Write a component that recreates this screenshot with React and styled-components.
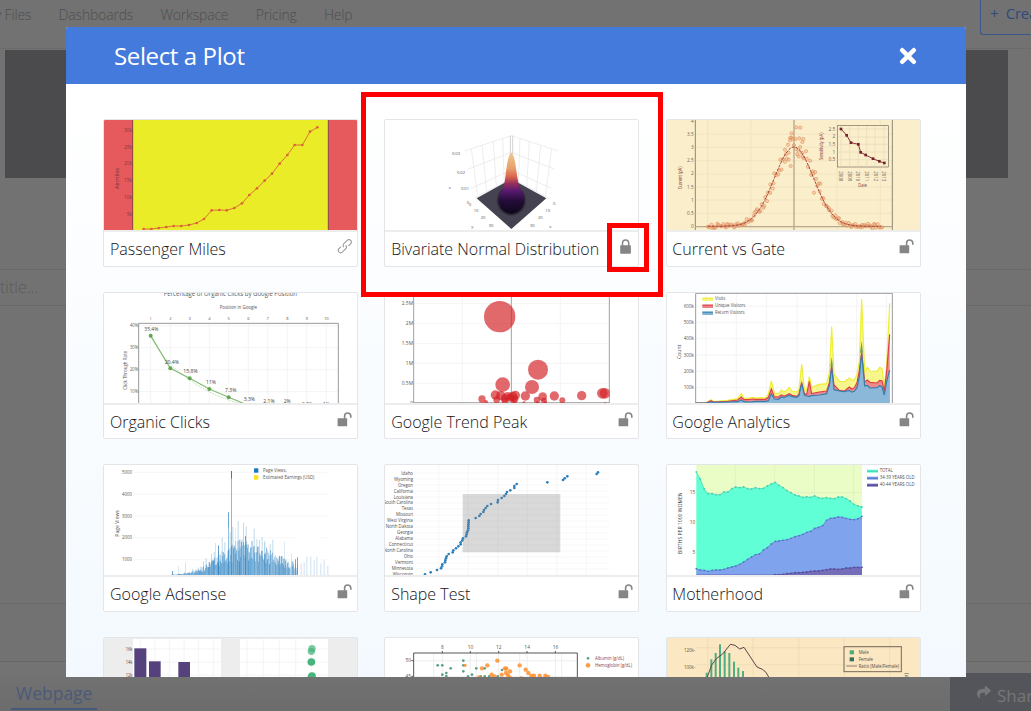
import React from "react";
import styled, { createGlobalStyle } from "styled-components";
import { FaTimes, FaShare } from "react-icons/fa";

const GlobalStyle = createGlobalStyle`
  * { box-sizing: border-box; }
  body { margin: 0; overflow: hidden; }
`;

const Page = styled.div`
  position: relative;
  width: 1031px;
  height: 711px;
  overflow: hidden;
  display: flex;
  flex-direction: column;
  background: #727272;
  font-family: "Open Sans", sans-serif;
  font-weight: 300;
  color: #545454;
`;

const TopBar = styled.div`
  display: flex;
  justify-content: space-between;
  height: 49px;
  border-bottom: 1px solid #6b6b6b;
`;

const Nav = styled.nav`
  display: flex;
  gap: 27.3px;
  margin-left: -17px;
  padding-top: 5px;
  font-size: 14px;
  line-height: 20px;
  font-weight: 300;
  letter-spacing: -0.18px;
  color: #4e4e4e;
  white-space: nowrap;
`;

const CreateButton = styled.div`
  width: 51px;
  height: 35px;
  border-left: 1px solid #3b5785;
  border-bottom: 1px solid #3b5785;
  border-bottom-left-radius: 3px;
  padding: 3px 0 0 9px;
  font-size: 15px;
  line-height: 20px;
  color: #2f4a7b;
  font-weight: 400;
  word-spacing: 4px;
  letter-spacing: -0.3px;
  white-space: nowrap;
  overflow: hidden;
`;

const Band = styled.div`
  height: 128px;
  margin: 1px 23px 0 5px;
  background: #4b4b4d;
`;

const TitleRow = styled.div`
  height: 37px;
  margin-top: 91px;
  border-top: 1px solid #686868;
  border-bottom: 1px solid #686868;
  font-size: 16px;
  line-height: 35px;
  white-space: nowrap;
  color: #5b5b5b;
`;

const Workspace = styled.div`
  height: 298px;
  border-bottom: 1px solid #6a6a6a;
`;

const Spacer = styled.div`
  height: 58px;
  border-bottom: 1px solid #666;
`;

const BottomBar = styled.div`
  flex: 1;
  display: flex;
  justify-content: space-between;
  align-items: flex-end;
  background: linear-gradient(#747474, #6c6c6c);
`;

const Tab = styled.div`
  margin-left: 11px;
  width: 86px;
  height: 31px;
  margin-bottom: 1px;
  border-bottom: 2px solid #485879;
  padding-left: 5px;
  font-size: 17.5px;
  line-height: 28px;
  font-weight: 400;
  color: #4b5a78;
`;

const ShareButton = styled.div`
  display: flex;
  align-items: center;
  gap: 6px;
  width: 81px;
  height: 38px;
  padding: 6px 0 0 27px;
  overflow: hidden;
  background: #54555a;
  color: #777779;
  font-size: 17px;
  font-weight: 400;
  svg { flex: none; margin-top: -7px; }
`;

const Modal = styled.section`
  position: absolute;
  left: 66px;
  top: 27px;
  width: 900px;
  height: 650px;
  display: flex;
  flex-direction: column;
  overflow: hidden;
  border-radius: 2px 2px 0 0;
  background: #fff;
`;

const ModalHeader = styled.header`
  flex: none;
  height: 57px;
  display: flex;
  align-items: center;
  justify-content: space-between;
  padding: 0 46px 0 48px;
  background: #447adb;
  color: #fff;
`;

const ModalTitle = styled.h1`
  margin: 0;
  font-size: 24px;
  line-height: 58px;
  font-weight: 400;
  letter-spacing: -0.38px;
`;

const ModalBody = styled.div`
  flex: 1;
  padding: 35.4px 0 0 37.2px;
  background: linear-gradient(#fff, #f3f9fe);
  overflow: hidden;
`;

const Grid = styled.div`
  display: grid;
  grid-template-columns: repeat(3, 255px);
  grid-auto-rows: 147.6px;
  column-gap: 26.2px;
  row-gap: 24.9px;
`;

const Card = styled.article`
  display: flex;
  flex-direction: column;
  border: 1px solid #e3e5e8;
  border-radius: 2px;
  background: #fff;
  overflow: hidden;
`;

const Thumb = styled.svg`
  display: block;
  flex: none;
  width: 254px;
  height: 110px;
  font-family: "Open Sans", sans-serif;
  font-weight: 400;
`;

const CardFooter = styled.div`
  flex: 1;
  display: flex;
  justify-content: space-between;
  border-top: 2px solid #ededee;
  padding: 0 5.3px 0 5.8px;
`;

const CardTitle = styled.h2`
  margin: 0;
  font-size: 16px;
  line-height: 34px;
  font-weight: 300;
  color: #141418;
  white-space: nowrap;
`;

const Glyph = styled.svg`
  flex: none;
  width: 15px;
  height: 17px;
  margin-top: 6px;
`;

const Highlight = styled.div`
  position: absolute;
  left: ${(p) => p.$x}px;
  top: ${(p) => p.$y}px;
  width: ${(p) => p.$w}px;
  height: ${(p) => p.$h}px;
  border: ${(p) => p.$b}px solid #fe0000;
`;

function StatusIcon({ kind }) {
  if (kind === "link")
    return (
      <Glyph viewBox="0 0 15 17" fill="none" stroke="#929292" strokeWidth="1">
        <g transform="translate(7.8 8.2) rotate(-45)">
          <path d="M1.2 0 A2.5 2.5 0 0 1 -.4 2.4 H-5.8 A2.4 2.4 0 0 1 -5.8 -2.4 H-2.8" />
          <path d="M-1.2 0 A2.5 2.5 0 0 1 .4 -2.4 H5.8 A2.4 2.4 0 0 1 5.8 2.4 H2.8" />
        </g>
      </Glyph>
    );
  if (kind === "locked")
    return (
      <Glyph viewBox="0 0 15 17">
        <rect x="2.2" y="7.2" width="10.7" height="8.6" rx="0.8" fill="#858585" />
        <path d="M4.5 8V5a3.1 3.1 0 0 1 6.2 0v3" fill="none" stroke="#858585" strokeWidth="1.5" />
      </Glyph>
    );
  return (
    <Glyph viewBox="0 0 15 17">
      <rect x="0.6" y="7.3" width="9.6" height="8" rx="0.5" fill="#858585" />
      <path d="M7.6 7.8V5.1a3.1 3.1 0 0 1 6.2 0v1.6" fill="none" stroke="#858585" strokeWidth="1.6" />
    </Glyph>
  );
}

/* Chart label: `w` fits the run to a given width, `r` rotates it about its start. */
function Label({ x, y, w, s = 13, a = "start", fill = "#555", r, children }) {
  return (
    <text
      x={x}
      y={y}
      fontSize={s * 1.12}
      textAnchor={a}
      fill={fill}
      textLength={w}
      lengthAdjust="spacingAndGlyphs"
      transform={r ? `rotate(${r} ${x} ${y})` : undefined}
    >
      {children}
    </text>
  );
}

const Lines = ({ xs = [], ys = [], x0, x1, y0, y1, stroke = "#eee", width = 2 }) => (
  <g stroke={stroke} strokeWidth={width}>
    {xs.map((x) => <line key={"x" + x} x1={x} x2={x} y1={y0} y2={y1} />)}
    {ys.map((y) => <line key={"y" + y} x1={x0} x2={x1} y1={y} y2={y} />)}
  </g>
);

const pointsOf = (s) => s.trim().split(/\s+/).map((p) => p.split(",").map(Number));
const noise = (i) => {
  const v = Math.sin(i * 127.1 + 3.7) * 43758.5453;
  return v - Math.floor(v);
};

function Miles() {
  const pts = "431,688 454,688 476,685 499,682 521,679 544,679 567,676 590,670 612,658 635,632 658,631 680,632 703,625 726,611 748,586 771,566 794,543 816,522 839,492 862,466 884,436 907,436 930,396 952,383";
  return (
    <Thumb viewBox="312 361 762 330">
      <rect x="312" y="361" width="762" height="330" fill="#e65a5e" />
      <rect x="398" y="361" width="588" height="330" fill="#e9ec27" />
      <Lines xs={[398, 985]} y0={361} y1={691} stroke="#8a3d4b" width={3} />
      {["30k", "25k", "20k", "15k", "10k", "5k"].map((t, i) => (
        <Label key={t} x={396} y={396 + i * 50.7} a="end" s={13} fill="#7e3b40">{t}</Label>
      ))}
      <Label x={357} y={568} w={64} s={13} r={-90} fill="#6e353a">Airmiles</Label>
      <polyline points={pts} fill="none" stroke="#db7439" strokeWidth="3" />
      {pointsOf(pts).map(([x, y]) => <circle key={x} cx={x} cy={y} r="4" fill="#df603c" />)}
    </Thumb>
  );
}

function Bivariate() {
  return (
    <Thumb viewBox="75 91 762 330">
      <defs>
        <linearGradient id="peak" x1="0" y1="190" x2="0" y2="372" gradientUnits="userSpaceOnUse">
          <stop offset="0" stopColor="#ecc98f" />
          <stop offset=".25" stopColor="#e8a06c" />
          <stop offset=".4" stopColor="#d9614d" />
          <stop offset=".5" stopColor="#98305f" />
          <stop offset=".62" stopColor="#591a6e" />
          <stop offset=".78" stopColor="#260d3b" />
          <stop offset="1" stopColor="#0d0719" />
        </linearGradient>
        <radialGradient id="base">
          <stop offset=".7" stopColor="#0c0717" />
          <stop offset="1" stopColor="#454251" />
        </radialGradient>
      </defs>
      <g fill="none" stroke="#e4e4e4" strokeWidth="2">
        <path d="M313 184 L454 138 L596 184 M323 239 L454 188 L585 239 M334 296 L454 241 L574 296 M345 325 L454 266 L565 325" />
        <path d="M334 178 L353 320 M366 167 L380 306 M400 156 L409 291 M428 147 L433 278 M575 178 L556 320 M542 167 L529 306 M508 156 L500 291 M480 147 L475 278" />
      </g>
      <path d="M451 138v55M458 138v55" stroke="#bdbdbd" strokeWidth="2" />
      <path d="M350 326L454 268L559 326L454 418Z" fill="#454251" />
      <ellipse cx="454" cy="333" rx="46" ry="47" fill="url(#base)" />
      <path d="M454 190C460 191 465 205 472 262Q477 298 490 314C500 345 479 372 454 372C428 372 408 345 419 314Q432 298 436 262C443 205 448 191 454 190Z" fill="url(#peak)" />
      {[["0.03", 276, 197], ["0.02", 291, 254], ["0.01", 303, 301], ["z", 266, 297], ["0", 320, 342], ["0", 326, 348], ["10", 341, 367], ["20", 362, 388], ["30", 386, 411], ["y", 334, 415], ["0", 579, 347], ["10", 556, 367], ["20", 534, 388], ["30", 510, 411], ["x", 568, 415]].map(([t, x, y], i) => (
        <Label key={i} x={x} y={y} s={11} w={t.length === 4 ? 24 : undefined}>{t}</Label>
      ))}
    </Thumb>
  );
}

function Gate() {
  const curve = (x) => 350 - 238 * Math.exp(-((x - 399) ** 2) / (2 * 59 ** 2));
  const xs = Array.from({ length: 131 }, (_, i) => 140 + i * 4);
  const inset = "540,58 557,77 570,99 592,104 599,128 614,136 636,147 655,155 670,160";
  return (
    <Thumb viewBox="18 31 762 330">
      <rect x="18" y="31" width="762" height="330" fill="#fbeeca" />
      <Lines xs={[140, 269, 528, 658]} ys={[73, 113, 153, 193, 232, 271, 311]} x0={104} x1={694} y0={31} y1={361} stroke="#eee1bf" />
      <Lines xs={[103, 694]} y0={31} y1={361} stroke="#8f8874" width={3} />
      <Lines xs={[399]} ys={[351]} x0={103} x1={694} y0={31} y1={361} stroke="#b5aa8f" width={4} />
      {["4", "3.5", "3", "2.5", "2", "1.5", "1", "0.5", "0"].map((t, i) => (
        <Label key={t} x={98} y={39 + i * 39.6} a="end" s={12.5} fill="#715d58">{t}</Label>
      ))}
      <Label x={62} y={239} w={68} r={-90} fill="#803336">Current (pA)</Label>
      <g fill="#ef9f65" fillOpacity=".35" stroke="#e0956a" strokeWidth="2">
        {xs.map((x, i) => {
          const h = 350 - curve(x);
          return <circle key={x} cx={x + noise(i) * 4} cy={curve(x) + (noise(i + 300) - 0.58) * (14 + h * 0.22)} r="4.8" />;
        })}
        {[[406, 53], [418, 54], [392, 71], [387, 92], [415, 86], [427, 88], [424, 97], [381, 105], [372, 120], [389, 169], [413, 140], [383, 150], [459, 249], [478, 222]].map(([x, y]) => <circle key={x} cx={x} cy={y} r="4.8" />)}
      </g>
      <polyline points={xs.map((x) => `${x},${curve(x)}`).join(" ")} fill="none" stroke="#a8443d" strokeWidth="3" strokeDasharray="9 3" />
      <rect x="529" y="48" width="153" height="124" fill="#fbeeca" stroke="#746e60" strokeWidth="2" />
      <Lines xs={[540, 566, 592, 617, 642, 669]} ys={[58, 82, 104, 127, 150]} x0={530} x1={681} y0={49} y1={171} stroke="#e7dbbc" />
      <polyline points={inset} fill="none" stroke="#8c3438" strokeWidth="3" />
      {pointsOf(inset).map(([x, y]) => <rect key={x} x={x - 4} y={y - 4} width="8" height="8" fill="#74222a" />)}
      {["2.5", "2", "1.5", "1", "0.5"].map((t, i) => (
        <Label key={t} x={523} y={63 + i * 23} a="end" s={13} fill="#715d58">{t}</Label>
      ))}
      {["2008", "2009", "2010", "2011", "2012", "2013"].map((t, i) => (
        <Label key={t} x={534 + i * 26} y={185} w={30} r={90} s={13} fill="#715d58">{t}</Label>
      ))}
      <Label x={487} y={151} w={82} r={-90} s={14} fill="#803336">Sensitivity (pA)</Label>
      <Label x={592} y={231} w={26} fill="#803336">Date</Label>
    </Thumb>
  );
}

function Organic() {
  const line = "167,152 226,250 284,280 343,312 401,337 460,361";
  const xs = [167, 226, 284, 343, 401, 460, 518, 577, 635, 694];
  return (
    <Thumb viewBox="27 24 762 330">
      <Lines xs={xs} ys={[122, 188, 254, 320]} x0={131} x1={730} y0={116} y1={354} />
      <path d="M131 356V115H730V356" fill="none" stroke="#999" strokeWidth="3" />
      <Label x={206} y={34} w={400} s={17}>Percentage of Organic Clicks by Google Position</Label>
      <Label x={374} y={72} w={112} s={13}>Position in Google</Label>
      {xs.map((x, i) => <Label key={x} x={x} y={106} a="middle" s={11}>{i + 1}</Label>)}
      {["40%", "30%", "20%", "10%"].map((t, i) => (
        <Label key={t} x={129} y={127 + i * 66} w={24} a="end" s={13}>{t}</Label>
      ))}
      <Label x={95} y={314} w={116} s={13} r={-90}>Click Through Rate</Label>
      <path d="M167 155C210 233 250 260 290 289S385 343 445 358" fill="none" stroke="#a8d29c" strokeWidth="2" strokeDasharray="5 3" />
      <polyline points={line} fill="none" stroke="#85bb76" strokeWidth="3.5" />
      {pointsOf(line).map(([x, y]) => <circle key={x} cx={x} cy={y} r="6" fill="#61a650" />)}
      {[["35.4%", 148, 137, 42], ["20.4%", 209, 236, 43], ["15.8%", 265, 265, 43], ["11%", 333, 298, 30], ["7.3%", 390, 322, 34], ["3.3%", 446, 347, 34], ["2.1%", 505, 355, 34], ["2%", 566, 355, 21], ["0.9%", 621, 362, 32], ["1%", 684, 362, 20]].map(([t, x, y, w]) => (
        <Label key={t} x={x} y={y} w={w} s={14} fill="#444">{t}</Label>
      ))}
    </Thumb>
  );
}

const BUBBLES = [[374, 95, 47], [489, 254, 30], [383, 299, 22], [471, 306, 21], [361, 330, 14], [377, 332, 14], [365, 344, 10], [389, 340, 12], [398, 334, 13], [406, 338, 12], [413, 334, 14], [421, 331, 14], [419, 342, 11], [451, 333, 14], [486, 345, 10], [503, 335, 13], [507, 347, 9], [538, 333, 14], [562, 346, 9], [620, 332, 14], [682, 325, 16], [690, 325, 16], [321, 342, 11], [333, 351, 6], [390, 347, 10], [417, 350, 8], [447, 353, 4], [487, 353, 4], [511, 353, 5], [691, 354, 3]];

function Trend() {
  return (
    <Thumb viewBox="30 24 762 330">
      <Lines xs={[262, 556]} ys={[56, 116, 176, 235, 295]} x0={116} x1={703} y0={24} y1={354} />
      <Lines xs={[116, 409, 703]} ys={[353]} x0={116} x1={703} y0={24} y1={354} stroke="#a2a2a2" width={3} />
      {["2.5M", "2M", "1.5M", "1M", "0.5M", "0"].map((t, i) => (
        <Label key={t} x={114} y={61 + i * 60} a="end" s={13}>{t}</Label>
      ))}
      <svg x="30" y="24" width="674" height="330" viewBox="30 24 674 330">
        {BUBBLES.map(([x, y, r], i) => <circle key={i} cx={x} cy={y} r={r} fill="#d32227" fillOpacity=".68" />)}
      </svg>
    </Thumb>
  );
}

function Analytics() {
  const xs = [104, 135, 150, 158, 200, 230, 241, 249, 262, 275, 285, 300, 313, 322, 331, 340, 352, 361, 369, 377, 385, 393, 408, 414, 422, 430, 437, 445, 452, 475, 497, 505, 512, 519, 535, 550, 565, 573, 580, 588, 595, 602, 611, 619, 627, 648, 656, 663, 670, 677, 686];
  const visits = [354, 353, 344, 350, 346, 341, 326, 339, 340, 337, 339, 338, 339, 328, 288, 324, 327, 315, 321, 316, 307, 318, 321, 314, 237, 311, 315, 275, 307, 298, 296, 264, 125, 268, 289, 290, 279, 286, 284, 269, 230, 43, 260, 247, 258, 259, 247, 251, 303, 240, 55];
  const unique = [354, 354, 347, 351, 349, 345, 336, 344, 344, 342, 343, 343, 343, 337, 312, 335, 336, 330, 333, 330, 326, 331, 334, 327, 292, 325, 329, 289, 326, 321, 318, 293, 243, 300, 316, 318, 306, 312, 308, 293, 257, 202, 291, 285, 292, 294, 286, 287, 318, 258, 148];
  const returning = [354, 354, 351, 352, 351, 350, 345, 350, 351, 350, 349, 349, 349, 347, 327, 342, 343, 336, 338, 334, 331, 335, 337, 331, 296, 330, 333, 334, 332, 330, 326, 302, 246, 314, 318, 320, 316, 321, 319, 308, 275, 205, 303, 301, 309, 308, 302, 306, 330, 290, 255];
  const area = (ys) => xs.map((x, i) => `${x},${ys[i]}`).join(" ");
  return (
    <Thumb viewBox="18 24 762 330">
      <Lines xs={[135, 226, 317, 408, 497, 587, 677]} ys={[63, 112, 161, 210, 259, 308]} x0={104} x1={694} y0={24} y1={354} />
      <path d="M104 356V25H694V356" fill="none" stroke="#9c9c9c" strokeWidth="3" />
      {[[visits, "#f6f68c", "#eeee35"], [unique, "#ed8b8b", "#df4048"], [returning, "#8bb7d8", "#397daf"]].map(([ys, f, s]) => (
        <g key={f}>
          <polygon points={`104,356 ${area(ys)} 686,356`} fill={f} />
          <polyline points={area(ys)} fill="none" stroke={s} strokeWidth="3.5" />
        </g>
      ))}
      <path d="M512 216L508 245H516ZM602 167L597 203H606ZM422 286L419 296H424Z" fill="#789c65" />
      {["600k", "500k", "400k", "300k", "200k", "100k"].map((t, i) => (
        <Label key={t} x={99} y={68 + i * 49} w={31} a="end" s={13}>{t}</Label>
      ))}
      <Label x={61} y={222} w={43} s={14} r={-90}>Count</Label>
      {[["Visits", "#f5f57a", "#e9e937", 31], ["Unique Visitors", "#eb8383", "#d94048", 91], ["Return Visitors", "#82b2d6", "#3479ad", 89]].map(([t, f, s, w], i) => (
        <g key={t}>
          <rect x="124" y={38 + i * 21} width="32" height="10" fill={f} />
          <rect x="124" y={38 + i * 21} width="32" height="3" fill={s} />
          <Label x={162} y={46 + i * 20.5} w={w} s={13}>{t}</Label>
        </g>
      ))}
    </Thumb>
  );
}

function Adsense() {
  const bars = Array.from({ length: 190 }, (_, i) => {
    const x = 228 + i * 2;
    const env = 105 * Math.exp(-((x - 438) ** 2) / (2 * (x < 438 ? 70 : 110) ** 2));
    return [x, env * (0.45 + noise(i) * 0.75), 0.5 + noise(i + 50) * 0.45];
  });
  return (
    <Thumb viewBox="27 16 762 330">
      <Lines ys={[38, 104, 169, 234, 300]} x0={115} x1={698} y0={16} y1={346} stroke="#f2f2f2" />
      {bars.map(([x, h, o], i) => <rect key={i} x={x} y={346 - h * 0.85} width="2.2" height={h} fill="#2c82c1" fillOpacity={o} />)}
      {bars.map(([x, h], i) => (i % 4 === 0 ? <rect key={i} x={x} y={346 - h * 1.35} width="3" height={h * 1.35} fill="#5ca0d3" fillOpacity=".38" /> : null))}
      <g fill="#2c82c1">
        <rect x="408" y="34" width="3" height="312" fillOpacity=".55" />
        <rect x="408" y="34" width="3" height="22" />
        <rect x="399" y="158" width="3" height="188" fillOpacity=".5" />
        <rect x="399" y="158" width="3" height="45" fillOpacity=".4" />
        <rect x="369" y="258" width="3" height="88" fillOpacity=".8" />
        <rect x="433" y="240" width="3" height="106" fillOpacity=".7" />
        <rect x="450" y="229" width="3" height="117" fillOpacity=".7" />
        <rect x="232" y="334" width="2" height="12" />
        <rect x="421" y="207" width="2" height="80" fillOpacity=".2" />
        <rect x="250" y="318" width="2" height="28" fillOpacity=".25" />
        <rect x="271" y="308" width="2" height="38" fillOpacity=".3" />
        <rect x="361" y="250" width="2" height="80" fillOpacity=".3" />
        <rect x="508" y="243" width="2" height="80" fillOpacity=".25" />
        <rect x="568" y="247" width="2" height="80" fillOpacity=".25" />
      </g>
      <rect x="584" y="225" width="36" height="121" fill="#fff" fillOpacity=".35" />
      <rect x="609" y="225" width="70" height="121" fill="#fff" />
      {[592, 600, 606, 617, 626, 634, 646, 656, 664, 676, 686, 697].map((x, i) => (
        <rect key={x} x={x} y={i < 3 ? 305 - i * 6 : 290 + noise(i) * 35} width="3" height="80" fill="#3d8cc6" fillOpacity={i < 3 ? 0.75 : 0.25} />
      ))}
      {["5000", "4000", "3000", "2000", "1000"].map((t, i) => (
        <Label key={t} x={111} y={43 + i * 65.5} w={30} a="end">{t}</Label>
      ))}
      <Label x={72} y={231} w={80} s={14} r={-90}>Page Views</Label>
      <rect x="477" y="26" width="13" height="13" fill="#1a76be" />
      <rect x="477" y="47" width="13" height="13" fill="#fbdf19" />
      <Label x={504} y={37} w={71} s={13}>Page Views,</Label>
      <Label x={504} y={58} w={154} s={13}>Estimated Earnings (USD)</Label>
    </Thumb>
  );
}

function Shape() {
  const states = [["Idaho", 35], ["Wyoming", 57], ["Oregon", 45], ["California", 58], ["Louisiana", 58], ["South Carolina", 88], ["Texas", 34], ["Missouri", 51], ["West Virginia", 78], ["North Dakota", 82], ["Georgia", 48], ["Alabama", 53], ["Connecticut", 73], ["North Carolina", 88], ["Ohio", 28], ["Vermont", 54], ["Minnesota", 64], ["Wisconsin", 61]];
  const dots = "669,38 665,43 577,50 569,56 564,61 517,68 425,73 418,79 418,85 406,92 396,97 393,103 388,109 380,115 369,121 368,128 348,133 337,139 332,145 327,151 325,157 317,163 313,169 302,175 281,182 281,188 280,194 280,200 280,206 279,212 276,218 275,224 273,230 264,236 262,242 257,248 257,254 250,260 243,266 235,272 233,278 221,283 215,290 213,296 211,302 210,308 202,314 201,320 198,326 186,331 167,338 150,344";
  return (
    <Thumb viewBox="30 16 762 330">
      <Lines xs={[191, 280, 368, 457, 545, 634]} ys={states.map((_, i) => 40 + i * 18)} x0={121} x1={702} y0={16} y1={346} stroke="#f3f3f4" />
      <g fill="#2b80bd">{pointsOf(dots).map(([x, y], i) => <circle key={i} cx={x} cy={y} r="4" />)}</g>
      <rect x="263" y="103" width="293" height="175" fill="#808080" fillOpacity=".3" />
      {states.map(([t, w], i) => <Label key={t} x={114} y={45 + i * 17.9} w={w} a="end" s={12.5} fill="#4d4d4d">{t}</Label>)}
    </Thumb>
  );
}

function Motherhood() {
  const total = [37, 58, 88, 102, 102, 105, 105, 97, 97, 87, 82, 84, 82, 87, 88, 84, 87, 86, 79, 73, 68, 77, 84, 93, 99, 106, 109, 113, 111, 113, 109, 114, 116, 114, 116, 117, 112, 112, 117, 124, 134, 139, 142];
  const mid = [327, 331, 332, 335, 332, 331, 331, 329, 325, 322, 319, 314, 307, 299, 292, 285, 283, 271, 264, 253, 245, 244, 242, 240, 236, 231, 228, 224, 218, 215, 206, 203, 198, 182, 176, 175, 172, 173, 176, 179, 180, 177, 170];
  const older = [346, 346, 346, 346, 346, 346, 346, 346, 346, 346, 346, 346, 346, 346, 346, 346, 346, 346, 346, 346, 345, 345, 344, 342, 341, 339, 339, 338, 337, 335, 334, 334, 332, 330, 328, 328, 329, 328, 325, 325, 323, 323, 323];
  const px = (i) => 106 + i * 11.83;
  return (
    <Thumb viewBox="18 16 762 330">
      <rect x="106" y="16" width="497" height="330" fill="#eafdc7" />
      <Lines xs={[223, 341, 460, 578]} ys={[99]} x0={106} x1={603} y0={16} y1={346} stroke="#dcedbc" />
      {[[total, "#61ffd6", "#45d2b1"], [mid, "#80a3ed", "#5577c6"], [older, "#756db8", "#544c9f"]].map(([ys, f, s]) => (
        <g key={f}>
          <polygon points={`106,348 ${ys.map((y, i) => `${px(i)},${y}`).join(" ")} 603,348`} fill={f} />
          <polyline points={ys.map((y, i) => `${px(i)},${y}`).join(" ")} fill="none" stroke={s} strokeWidth="2" />
          {ys.map((y, i) => (y < 346 ? <circle key={i} cx={px(i)} cy={y} r="2.8" fill={s} /> : null))}
        </g>
      ))}
      <Label x={103} y={104} a="end">15</Label>
      <Label x={103} y={194} a="end">10</Label>
      <Label x={103} y={283} a="end">5</Label>
      <Label x={63} y={283} w={185} s={14} r={-90} fill="#444">BIRTHS PER 1000 WOMEN</Label>
      {[["TOTAL", "#61ffd6", "#40c9aa", 39], ["34-39 YEARS OLD", "#80a3ed", "#4b6fc0", 105], ["40-44 YEARS OLD", "#756db8", "#4d4598", 105]].map(([t, f, s, w], i) => (
        <g key={t}>
          <rect x="618" y={30 + i * 21} width="33" height="9" fill={f} />
          <rect x="618" y={33 + i * 21} width="33" height="3" fill={s} />
          <Label x={656} y={38 + i * 20.5} w={w} s={12} fill="#4d4d4d">{t}</Label>
        </g>
      ))}
    </Thumb>
  );
}

function Histogram() {
  return (
    <Thumb viewBox="312 39 762 330">
      <rect x="312" y="30" width="762" height="340" fill="#ededed" />
      <rect x="399" y="42" width="264" height="320" fill="#fff" />
      <rect x="720" y="42" width="264" height="320" fill="#fff" />
      <Lines xs={[421, 465, 508, 552, 596, 640]} ys={[72, 111, 150]} x0={399} x1={663} y0={42} y1={362} />
      <Lines xs={[741, 790, 838, 887, 934]} ys={[72, 111, 150]} x0={720} x1={984} y0={42} y1={362} />
      {[["16k", 78], ["14k", 116], ["12k", 155]].map(([t, y]) => <Label key={t} x={397} y={y} w={20} s={12} a="end" fill="#4b4456">{t}</Label>)}
      <g fill="#55417b">
        <rect x="403" y="70" width="36" height="200" />
        <rect x="447" y="109" width="35" height="200" />
        <rect x="535" y="111" width="35" height="200" />
      </g>
      <g fill="#46b47c">
        <circle cx="936" cy="71" r="11" fillOpacity=".7" />
        <circle cx="934" cy="79" r="11" fillOpacity=".7" />
        <circle cx="934" cy="111" r="11.5" />
        <circle cx="936" cy="153" r="11.5" />
        <circle cx="934" cy="158" r="11.5" />
      </g>
    </Thumb>
  );
}

function Blood() {
  const small = "188,121 202,121 227,130 202,149 214,144 214,153 265,107 265,121 265,139 304,130 329,130 291,149 279,154 317,154 329,154 343,154 368,154 381,135";
  const big = "367,107 270,121 337,121 321,130 434,121 390,130 394,131 405,139 393,144 399,150 380,149 350,149 358,154 312,157 404,157 452,134 460,144 469,152 477,152 494,152 511,152 519,156 439,160";
  return (
    <Thumb viewBox="30 39 762 330">
      <Lines xs={[176, 202, 286, 304, 371, 434, 456, 541, 560]} ys={[107, 154]} x0={116} x1={607} y0={84} y1={369} stroke="#e6e6e6" />
      <path d="M116 369V84H607V369M202 78v6M286 78v6M371 78v6M456 78v6M541 78v6M109 107h6M109 154h6" fill="none" stroke="#555" strokeWidth="3" />
      {["8", "10", "12", "14", "16"].map((t, i) => <Label key={t} x={202 + i * 84.8} y={72} a="middle" s={13}>{t}</Label>)}
      <Label x={108} y={112} a="end" s={13}>50</Label>
      <Label x={108} y={159} a="end" s={13}>45</Label>
      <g fill="#57a189">{pointsOf(small).map(([x, y], i) => <circle key={i} cx={x} cy={y} r="4" />)}</g>
      <g fill="#ff8f2e" fillOpacity=".85">{pointsOf(big).map(([x, y], i) => <circle key={i} cx={x} cy={y} r={i === 1 ? 5 : 6.5} />)}</g>
      <circle cx="639" cy="100" r="4" fill="#57a189" />
      <circle cx="639" cy="121" r="7" fill="#ff9c49" />
      <Label x={660} y={104} w={87} s={13} fill="#913d4b">Albumin (g/dL)</Label>
      <Label x={660} y={125} w={111} s={13} fill="#913d4b">Hemoglobin (g/dL)</Label>
    </Thumb>
  );
}

function Ratio() {
  return (
    <Thumb viewBox="18 39 762 330">
      <rect x="18" y="30" width="762" height="340" fill="#fbe7c1" />
      <Lines xs={[140, 276, 413, 550, 686]} ys={[68, 119]} x0={104} x1={725} y0={39} y1={369} stroke="#ecd9b6" />
      <Label x={103} y={80} w={34} a="end" fill="#5d5548">120k-</Label>
      <Label x={103} y={132} w={34} a="end" fill="#5d5548">100k-</Label>
      <g fill="#52ad80">
        {[[134, 143], [148, 103], [161, 84], [174, 58], [188, 79], [202, 84], [216, 110], [229, 128], [243, 138]].map(([x, y]) => (
          <rect key={x} x={x} y={y} width="6" height="200" />
        ))}
      </g>
      <path d="M139 156L152 120L167 100L185 87L208 58L222 61L236 72L249 67L288 126L304 133L315 142L324 158" fill="none" stroke="#5d4447" strokeWidth="3" />
      <rect x="549" y="65" width="172" height="75" fill="none" stroke="#776b59" strokeWidth="3" />
      <rect x="566" y="76" width="13" height="12" fill="#4dab7e" />
      <rect x="566" y="97" width="13" height="12" fill="#38705c" />
      <path d="M556 123h32" stroke="#5d4447" strokeWidth="2" />
      <Label x={593} y={86} w={30} fill="#554e44">Male</Label>
      <Label x={593} y={107} w={43} fill="#554e44">Female</Label>
      <Label x={593} y={128} w={121} fill="#554e44">Ratio (Male/Female)</Label>
      <Label x={742} y={158} s={15} r={-90} fill="#554e44">e)</Label>
    </Thumb>
  );
}

const PLOTS = [
  ["Passenger Miles", "link", Miles],
  ["Bivariate Normal Distribution", "locked", Bivariate],
  ["Current vs Gate", "open", Gate],
  ["Organic Clicks", "open", Organic],
  ["Google Trend Peak", "open", Trend],
  ["Google Analytics", "open", Analytics],
  ["Google Adsense", "open", Adsense],
  ["Shape Test", "open", Shape],
  ["Motherhood", "open", Motherhood],
  ["", "", Histogram],
  ["", "", Blood],
  ["", "", Ratio],
];

export default function App() {
  return (
    <Page>
      <GlobalStyle />
      <TopBar>
        <Nav>
          <span>My Files</span>
          <span>Dashboards</span>
          <span>Workspace</span>
          <span>Pricing</span>
          <span>Help</span>
        </Nav>
        <CreateButton>+ Create</CreateButton>
      </TopBar>
      <Band />
      <TitleRow>title...</TitleRow>
      <Workspace />
      <Spacer />
      <BottomBar>
        <Tab>Webpage</Tab>
        <ShareButton>
          <FaShare size={14} />
          Share
        </ShareButton>
      </BottomBar>
      <Modal>
        <ModalHeader>
          <ModalTitle>Select a Plot</ModalTitle>
          <FaTimes size={24} />
        </ModalHeader>
        <ModalBody>
          <Grid>
            {PLOTS.map(([title, status, Chart], i) => (
              <Card key={i}>
                <Chart />
                {title && (
                  <CardFooter>
                    <CardTitle>{title}</CardTitle>
                    <StatusIcon kind={status} />
                  </CardFooter>
                )}
              </Card>
            ))}
          </Grid>
        </ModalBody>
      </Modal>
      <Highlight $x={361} $y={92} $w={302} $h={205} $b={5} />
      <Highlight $x={607} $y={223} $w={42} $h={49} $b={5} />
    </Page>
  );
}
